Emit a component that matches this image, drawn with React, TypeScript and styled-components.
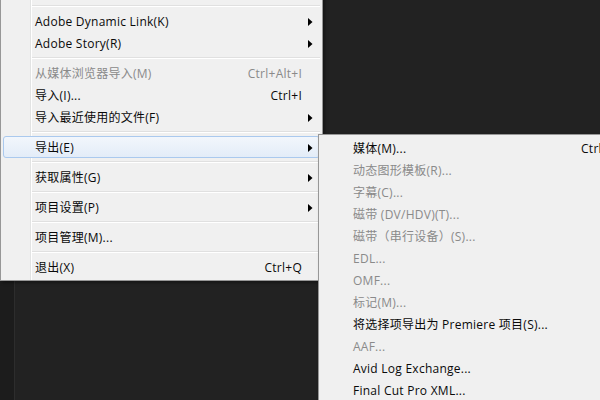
import React from "react";
import styled, { createGlobalStyle } from "styled-components";

const Global = createGlobalStyle`
  html, body { margin: 0; padding: 0; }
  body {
    width: 600px;
    height: 400px;
    overflow: hidden;
    background: #222222;
    font-family: "Open Sans", "Noto Sans CJK SC", sans-serif;
  }
  #root { width: 600px; height: 400px; }
`;

const Workspace = styled.div`
  position: relative;
  width: 600px;
  height: 400px;
  display: flex;
  overflow: hidden;
  background: #222222;
`;

const SideStrip = styled.div`
  width: 14px;
  flex: none;
  background: #1c1c1c;
  border-right: 1px solid #2d2d2d;
`;

const Panel = styled.div`
  flex: 1;
  background: #222222;
`;

const Menu = styled.div<{ $left: number; $top: number; $width: number; $gutter?: boolean }>`
  position: absolute;
  left: ${(p) => p.$left}px;
  top: ${(p) => p.$top}px;
  width: ${(p) => p.$width}px;
  box-sizing: border-box;
  padding: 2px;
  border: 1px solid #979797;
  background: ${(p) =>
    p.$gutter
      ? "linear-gradient(to right, transparent 29px, #e2e3e3 29px, #e2e3e3 30px, #ffffff 30px, #ffffff 31px, transparent 31px) no-repeat, #f0f0f0"
      : "#f0f0f0"};
  box-shadow: 2px 2px 3px rgba(0, 0, 0, 0.35);
  display: flex;
  flex-direction: column;
  font-size: 12px;
  line-height: 22px;
  letter-spacing: 0.25px;
  z-index: ${(p) => (p.$gutter ? 1 : 2)};
`;

const Item = styled.div<{ $disabled?: boolean; $active?: boolean }>`
  height: 22px;
  box-sizing: border-box;
  display: grid;
  grid-template-columns: 1fr auto 15px;
  align-items: center;
  padding-left: 32px;
  border: 1px solid ${(p) => (p.$active ? "#aac9ee" : "transparent")};
  border-radius: 3px;
  background: ${(p) =>
    p.$active ? "linear-gradient(to bottom, #f2f6fc, #e3ecf8)" : "transparent"};
  color: ${(p) => (p.$disabled ? "#8a8a8a" : "#0a0a0a")};
  white-space: nowrap;
`;

const Label = styled.span`
  margin-left: -1px;
`;

const Shortcut = styled.span`
  padding-left: 24px;
  margin-right: 2px;
`;

const ArrowCell = styled.span`
  display: flex;
  align-items: center;
  padding-left: 4px;
`;

const Separator = styled.div`
  height: 8px;
  display: flex;
  flex-direction: column;
  justify-content: center;
  margin-left: 29px;
  &::before {
    content: "";
    display: block;
    height: 1px;
    background: #e0e0e0;
  }
  &::after {
    content: "";
    display: block;
    height: 1px;
    background: #ffffff;
  }
`;

type Entry =
  | { sep: true }
  | { sep?: false; label: string; shortcut?: string; sub?: boolean; disabled?: boolean; active?: boolean };

const Arrow = () => (
  <svg width="5" height="8" viewBox="0 0 5 8">
    <polygon points="0,0 4.5,4 0,8" fill="#000" />
  </svg>
);

const mainItems: Entry[] = [
  { label: "" },
  { sep: true },
  { label: "Adobe Dynamic Link(K)", sub: true },
  { label: "Adobe Story(R)", sub: true },
  { sep: true },
  { label: "从媒体浏览器导入(M)", shortcut: "Ctrl+Alt+I", disabled: true },
  { label: "导入(I)...", shortcut: "Ctrl+I" },
  { label: "导入最近使用的文件(F)", sub: true },
  { sep: true },
  { label: "导出(E)", sub: true, active: true },
  { sep: true },
  { label: "获取属性(G)", sub: true },
  { sep: true },
  { label: "项目设置(P)", sub: true },
  { sep: true },
  { label: "项目管理(M)..." },
  { sep: true },
  { label: "退出(X)", shortcut: "Ctrl+Q" },
];

const exportItems: Entry[] = [
  { label: "媒体(M)...", shortcut: "Ctrl+M" },
  { label: "动态图形模板(R)...", disabled: true },
  { label: "字幕(C)...", disabled: true },
  { label: "磁带 (DV/HDV)(T)...", disabled: true },
  { label: "磁带（串行设备）(S)...", disabled: true },
  { label: "EDL...", disabled: true },
  { label: "OMF...", disabled: true },
  { label: "标记(M)...", disabled: true },
  { label: "将选择项导出为 Premiere 项目(S)..." },
  { label: "AAF...", disabled: true },
  { label: "Avid Log Exchange..." },
  { label: "Final Cut Pro XML..." },
];

const renderEntries = (entries: Entry[]) =>
  entries.map((e, i) =>
    e.sep ? (
      <Separator key={i} />
    ) : (
      <Item key={i} $disabled={e.disabled} $active={e.active}>
        <Label>{e.label}</Label>
        <Shortcut>{e.shortcut ?? ""}</Shortcut>
        <ArrowCell>{e.sub ? <Arrow /> : null}</ArrowCell>
      </Item>
    )
  );

export default function App() {
  return (
    <>
      <Global />
      <Workspace>
        <SideStrip />
        <Panel />
        <Menu $left={0} $top={-23} $width={323} $gutter>
          {renderEntries(mainItems)}
        </Menu>
        <Menu $left={318} $top={134} $width={323}>
          {renderEntries(exportItems)}
        </Menu>
      </Workspace>
    </>
  );
}
